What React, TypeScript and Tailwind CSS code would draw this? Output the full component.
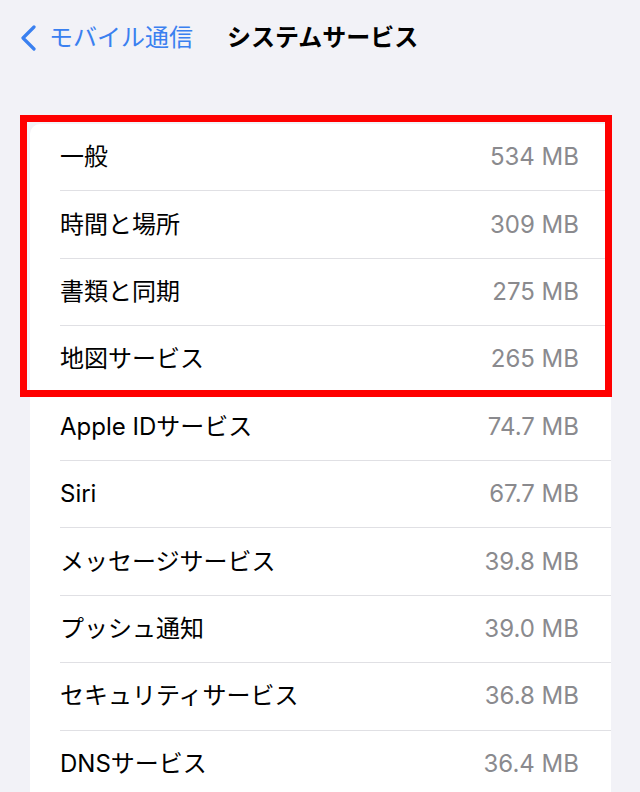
import React from 'react';

const font = { fontFamily: 'Inter, "Noto Sans CJK JP", sans-serif' };

const rows = [
  { name: '一般', size: '534 MB' },
  { name: '時間と場所', size: '309 MB' },
  { name: '書類と同期', size: '275 MB' },
  { name: '地図サービス', size: '265 MB' },
  { name: 'Apple IDサービス', size: '74.7 MB' },
  { name: 'Siri', size: '67.7 MB' },
  { name: 'メッセージサービス', size: '39.8 MB' },
  { name: 'プッシュ通知', size: '39.0 MB' },
  { name: 'セキュリティサービス', size: '36.8 MB' },
  { name: 'DNSサービス', size: '36.4 MB' },
];

export default function App() {
  return (
    <div className="relative h-[792px] w-[640px] overflow-hidden bg-[#f2f2f7]" style={font}>
      {/* Nav bar */}
      <div className="flex h-[76px] items-center">
        <svg width="18" height="26" viewBox="0 0 18 26" className="ml-[19px]" fill="none">
          <path d="M15 2 L4 13 L15 24" stroke="#3a80f0" strokeWidth="3.2" strokeLinecap="round" strokeLinejoin="round" />
        </svg>
        <span className="ml-[12px] text-[24px] text-[#3a80f0]">モバイル通信</span>
        <span className="ml-[34px] text-[24px] font-bold text-black">システムサービス</span>
      </div>

      {/* List */}
      <div className="ml-[30px] mt-[48px] w-[581px] rounded-tl-[10px] bg-white">
        {rows.map((row, i) => (
          <div key={row.name} className="flex h-[67.4px] flex-col">
            <div className="flex flex-1 items-center justify-between pl-[30px] pr-[32px]">
              <span className="text-[24px] text-black">{row.name}</span>
              <span className="text-[24px] text-[#8a8a8e]">{row.size}</span>
            </div>
            {i < rows.length - 1 && <div className="ml-[30px] h-px bg-[#e0e0e4]" />}
          </div>
        ))}
      </div>

      {/* Highlight annotation */}
      <div className="absolute left-[20px] top-[115px] h-[282px] w-[592px] border-[7px] border-[#ff0000]" />
    </div>
  );
}
